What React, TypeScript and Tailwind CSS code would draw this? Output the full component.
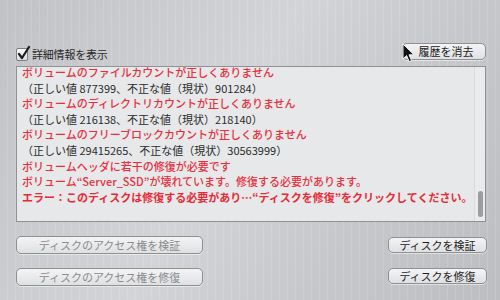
import React from 'react';

const lines: { text: string; kind: 'red' | 'black' | 'bold' }[] = [
  { text: 'ボリュームのファイルカウントが正しくありません', kind: 'red' },
  { text: '（正しい値 877399、不正な値（現状）901284）', kind: 'black' },
  { text: 'ボリュームのディレクトリカウントが正しくありません', kind: 'red' },
  { text: '（正しい値 216138、不正な値（現状）218140）', kind: 'black' },
  { text: 'ボリュームのフリーブロックカウントが正しくありません', kind: 'red' },
  { text: '（正しい値 29415265、不正な値（現状）30563999）', kind: 'black' },
  { text: 'ボリュームヘッダに若干の修復が必要です', kind: 'red' },
  { text: 'ボリューム“Server_SSD”が壊れています。修復する必要があります。', kind: 'red' },
  { text: 'エラー：このディスクは修復する必要があり…“ディスクを修復”をクリックしてください。', kind: 'bold' },
];

const Cursor: React.FC = () => (
  <svg className="absolute left-[402px] top-[43px]" width="14" height="20" viewBox="0 0 14 20">
    <path d="M1 1 L1 16 L4.6 12.6 L7.2 18.6 L9.6 17.6 L7 11.8 L12 11.8 Z" fill="#111" stroke="#f4f4f4" strokeWidth="1" strokeLinejoin="round" />
  </svg>
);

const App: React.FC = () => {
  const btn =
    'flex items-center justify-center rounded-[5px] border border-[#8e9094] bg-[linear-gradient(#f4f4f5,#dfe0e2)] shadow-[0_1px_0_rgba(255,255,255,0.5)] text-[11px] leading-none';

  return (
    <div
      className="relative w-[500px] h-[300px] overflow-hidden bg-[#c9cbcf] bg-[repeating-linear-gradient(90deg,rgba(255,255,255,0)_0px,rgba(255,255,255,0)_7px,rgba(255,255,255,0.12)_7px,rgba(255,255,255,0.12)_8px),linear-gradient(120deg,#c0c2c6_0%,#d2d4d7_45%,#c6c8cc_70%,#bcbec2_100%)]"
      style={{ fontFamily: '"Noto Sans CJK JP", "Noto Sans", sans-serif' }}
    >
      <div className="flex flex-col pl-4 pr-[14px] pt-[43px]">
        <div className="flex items-center justify-between h-[17px]">
          <div className="flex items-center gap-[4px] mt-[6px]">
            <div className="relative w-[12px] h-[13px] rounded-[2px] border border-[#7c7e82] bg-[linear-gradient(#fafafa,#dcdde0)]">
              <svg className="absolute -left-[1px] -top-[4px]" width="15" height="16" viewBox="0 0 15 16">
                <path d="M3 9 L6 13 L13 2" fill="none" stroke="#1c1c1c" strokeWidth="2.2" strokeLinecap="round" strokeLinejoin="round" />
              </svg>
            </div>
            <span className="text-[11px] text-[#2a2a2a] tracking-[-0.2px]">詳細情報を表示</span>
          </div>
          <div className={`${btn} w-[84px] h-[17px] pl-[4px] text-[#222]`}>履歴を消去</div>
        </div>

        <div className="relative mt-[6px] h-[156px] border border-[#8f9195] bg-[#e6e8ea] overflow-hidden">
          <div className="-mt-[2px] pl-[5px] pr-4 text-[11px] leading-[15.6px] whitespace-nowrap">
            {lines.map((l, i) => (
              <div
                key={i}
                className={
                  l.kind === 'black'
                    ? 'text-[#2c2c2c]'
                    : l.kind === 'bold'
                    ? 'text-[#e52b38] font-bold'
                    : 'text-[#e5303d] font-medium'
                }
              >
                {l.text}
              </div>
            ))}
          </div>
          <div className="absolute right-0 top-0 bottom-0 w-[11px] border-l border-[#d8dadc] bg-[#e9ebed]">
            <div className="absolute left-[3px] top-[124px] w-[5px] h-[26px] rounded-full bg-[#9b9d9f]" />
          </div>
        </div>

        <div className="mt-[14px] flex justify-between">
          <div className={`${btn} w-[187px] h-[18px] text-[#8a8b8d]`}>ディスクのアクセス権を検証</div>
          <div className={`${btn} w-[99px] h-[16px] mt-[1px] mr-[-1px] text-[#1e1e1e]`}>ディスクを検証</div>
        </div>
        <div className="mt-[14px] flex justify-between">
          <div className={`${btn} w-[187px] h-[18px] text-[#8a8b8d]`}>ディスクのアクセス権を修復</div>
          <div className={`${btn} w-[99px] h-[16px] mr-[-1px] text-[#1e1e1e]`}>ディスクを修復</div>
        </div>
      </div>
      <Cursor />
    </div>
  );
};

export default App;
